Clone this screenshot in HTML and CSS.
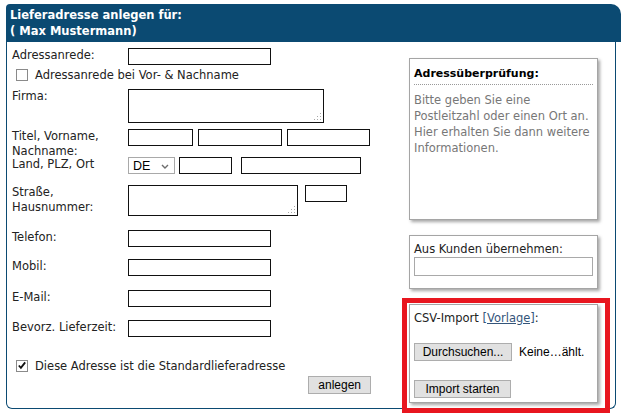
FILE: index.html
```html
<!DOCTYPE html>
<html lang="de">
<head>
    <meta charset="UTF-8">
    <title>Lieferadresse anlegen</title>
    <link rel="stylesheet" href="styles.css">
</head>
<body>
    <div class="panel">
        <div class="panel-head">Lieferadresse anlegen für:<br>( Max Mustermann)</div>
        <div class="panel-body">
            <form class="address-form">
                <div class="row">
                    <label class="lbl">Adressanrede:</label>
                    <input class="field w-std" type="text">
                </div>
                <label class="check check-top">
                    <input type="checkbox">
                    <span class="box"></span>
                    Adressanrede bei Vor- &amp; Nachname
                </label>
                <div class="row row-firma">
                    <label class="lbl">Firma:</label>
                    <div class="ta-wrap">
                        <textarea class="field ta-firma"></textarea>
                        <svg class="grip" width="9" height="9" viewBox="0 0 9 9"><rect x="7" y="1" width="1" height="1"/><rect x="4" y="4" width="1" height="1"/><rect x="7" y="4" width="1" height="1"/><rect x="1" y="7" width="1" height="1"/><rect x="4" y="7" width="1" height="1"/><rect x="7" y="7" width="1" height="1"/></svg>
                    </div>
                </div>
                <div class="row row-name">
                    <label class="lbl">Titel, Vorname, Nachname:</label>
                    <input class="field w-titel" type="text">
                    <input class="field w-vorname" type="text">
                    <input class="field w-nachname" type="text">
                </div>
                <div class="row row-land">
                    <label class="lbl">Land, PLZ, Ort</label>
                    <div class="select">
                        <select><option>DE</option><option>AT</option><option>CH</option></select>
                        <svg class="chevron" width="8" height="5" viewBox="0 0 8 5"><path d="M1 1 L4 4 L7 1" fill="none" stroke="#6d6d6d" stroke-width="1.4"/></svg>
                    </div>
                    <input class="field w-plz" type="text">
                    <input class="field w-ort" type="text">
                </div>
                <div class="row row-strasse">
                    <label class="lbl">Straße, Hausnummer:</label>
                    <div class="ta-wrap">
                        <textarea class="field ta-strasse"></textarea>
                        <svg class="grip" width="9" height="9" viewBox="0 0 9 9"><rect x="7" y="1" width="1" height="1"/><rect x="4" y="4" width="1" height="1"/><rect x="7" y="4" width="1" height="1"/><rect x="1" y="7" width="1" height="1"/><rect x="4" y="7" width="1" height="1"/><rect x="7" y="7" width="1" height="1"/></svg>
                    </div>
                    <input class="field w-nr" type="text">
                </div>
                <div class="row row-telefon">
                    <label class="lbl">Telefon:</label>
                    <input class="field w-std" type="text">
                </div>
                <div class="row row-mobil">
                    <label class="lbl">Mobil:</label>
                    <input class="field w-std" type="text">
                </div>
                <div class="row row-mail">
                    <label class="lbl">E-Mail:</label>
                    <input class="field w-std" type="text">
                </div>
                <div class="row row-zeit">
                    <label class="lbl">Bevorz. Lieferzeit:</label>
                    <input class="field w-std" type="text">
                </div>
                <label class="check check-bottom">
                    <input type="checkbox" checked>
                    <span class="box"><svg width="11" height="11" viewBox="0 0 11 11"><path d="M2 5.5 L4.3 8 L9 2" fill="none" stroke="#111" stroke-width="2"/></svg></span>
                    Diese Adresse ist die Standardlieferadresse
                </label>
                <div class="actions">
                    <button type="button" class="btn">anlegen</button>
                </div>
            </form>

            <div class="side">
                <div class="card card-check">
                    <div class="card-title">Adressüberprüfung:</div>
                    <p class="hint">Bitte geben Sie eine<br>Postleitzahl oder einen Ort an.<br>Hier erhalten Sie dann weitere<br>Informationen.</p>
                </div>
                <div class="card card-customer">
                    <div class="card-label">Aus Kunden übernehmen:</div>
                    <input class="customer-input" type="text">
                </div>
                <div class="card card-csv">
                    <div class="card-label">CSV-Import <a href="#">[Vorlage]</a>:</div>
                    <div class="file-row">
                        <button type="button" class="btn btn-browse">Durchsuchen...</button>
                        <span class="file-name">Keine…ählt.</span>
                    </div>
                    <button type="button" class="btn btn-import">Import starten</button>
                </div>
            </div>
        </div>
    </div>

    <div class="highlight"></div>
</body>
</html>
```

FILE: styles.css
```css
body {
    margin: 0;
    font-family: "DejaVu Sans", Verdana, sans-serif;
    font-size: 11px;
    color: #222;
    background-color: #fff;
}

.panel {
    width: 610px;
    margin: 4px 0 0 6px;
}

.panel-head {
    margin-right: -5px;
    padding: 3px 3px 3px 4px;
    background-color: #0b4a72;
    color: #fff;
    font-weight: bold;
    font-size: 11.5px;
    line-height: 16px;
    border-radius: 4px 10px 0 0;
}

.panel-body {
    display: flex;
    height: 367px;
    box-sizing: border-box;
    border: 1px solid #0b4a72;
    border-top: none;
    border-radius: 0 0 6px 6px;
}

/* left: the form */

.address-form {
    width: 402px;
    flex: none;
    box-sizing: border-box;
    padding: 6px 0 0 5px;
}

.row {
    display: flex;
    align-items: flex-start;
}

.lbl {
    width: 116px;
    flex: none;
    line-height: 15px;
    font-size: 11.5px;
}

.field {
    box-sizing: border-box;
    height: 17px;
    margin: 0;
    padding: 0 2px;
    border: 1px solid #111;
    background: #fff;
    font: inherit;
}

.w-std { width: 143px; }
.w-titel { width: 65px; }
.w-vorname { width: 84px; margin-left: 5px; }
.w-nachname { width: 83px; margin-left: 5px; }
.w-plz { width: 53px; margin-left: 4px; }
.w-ort { width: 120px; margin-left: 9px; }
.w-nr { width: 42px; margin-left: 7px; }

.ta-wrap {
    position: relative;
}

.ta-wrap textarea {
    display: block;
    resize: none;
}

.ta-firma { width: 196px; height: 34px; }
.ta-strasse { width: 170px; height: 31px; }

.grip {
    position: absolute;
    right: 2px;
    bottom: 2px;
    fill: #a8a8a8;
}

.select {
    position: relative;
    width: 47px;
    height: 17px;
}

.select select {
    appearance: none;
    -webkit-appearance: none;
    width: 100%;
    height: 100%;
    margin: 0;
    padding: 0 0 0 4px;
    border: 1px solid #a9a9a9;
    border-radius: 0;
    background: #fff;
    font-family: "Liberation Sans", Arial, sans-serif;
    font-size: 12.5px;
    color: #000;
}

.chevron {
    position: absolute;
    right: 6px;
    top: 7px;
}

.row-firma { margin-top: 7px; }
.row-name { margin-top: 6px; height: 17px; }
.row-land { margin-top: 11px; }
.row-strasse { margin-top: 11px; }
.row-telefon { margin-top: 14px; }
.row-mobil { margin-top: 12px; }
.row-mail { margin-top: 14px; }
.row-zeit { margin-top: 13px; }

.check {
    display: flex;
    align-items: center;
    height: 15px;
    margin-left: 4px;
    font-size: 11.5px;
}

.check input {
    display: none;
}

.check .box {
    width: 12px;
    height: 12px;
    box-sizing: border-box;
    margin-right: 7px;
    border: 1px solid #8a8a8a;
    background: #fff;
    display: flex;
    align-items: center;
    justify-content: center;
}

.check-top { margin-top: 2px; }
.check-bottom { margin-top: 21px; }

.actions {
    display: flex;
    justify-content: flex-end;
    padding-right: 38px;
    margin-top: 3px;
}

.btn {
    box-sizing: border-box;
    height: 18px;
    margin: 0;
    padding: 0 9px;
    border: 1px solid #adadad;
    background-color: #e1e1e1;
    font-family: "Liberation Sans", Arial, sans-serif;
    font-size: 12px;
    color: #000;
}

/* right: info boxes */

.side {
    width: 189px;
    margin-top: 16px;
    display: flex;
    flex-direction: column;
    gap: 15px;
}

.card {
    box-sizing: border-box;
    padding: 0 4px;
    border: 1px solid #a5a5a5;
    background: #fff;
    box-shadow: 2px 2px 3px rgba(0, 0, 0, 0.35);
}

.card-check {
    height: 162px;
    padding-top: 7px;
}

.card-title {
    font-weight: bold;
    color: #000;
    line-height: 15px;
    padding-bottom: 3px;
    border-bottom: 1px dotted #999;
}

.hint {
    margin: 7px 0 0;
    line-height: 16px;
    font-size: 11.5px;
    color: #777;
}

.card-label {
    line-height: 15px;
    font-size: 11.5px;
}

.card-label a {
    color: #34557a;
}

.card-customer {
    height: 54px;
    padding-top: 6px;
}

.customer-input {
    display: block;
    box-sizing: border-box;
    width: 179px;
    height: 19px;
    margin: 0;
    border: 1px solid #a9a9a9;
}

.card-csv {
    height: 99px;
    padding-top: 6px;
}

.file-row {
    display: flex;
    align-items: center;
    margin-top: 17px;
}

.btn-browse {
    width: 98px;
    padding: 0;
}

.file-name {
    margin-left: 7px;
    font-family: "Liberation Sans", Arial, sans-serif;
    font-size: 12px;
    color: #000;
}

.btn-import {
    margin-top: 19px;
    width: 97px;
    padding: 0;
}

.highlight {
    position: absolute;
    left: 402px;
    top: 298px;
    width: 208px;
    height: 115px;
    box-sizing: border-box;
    border: 5px solid #e8161f;
}
```
